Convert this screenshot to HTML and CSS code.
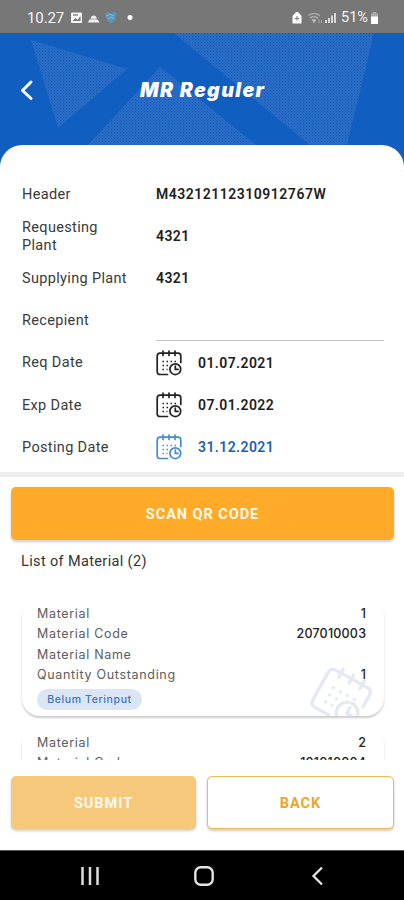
FILE: index.html
```html
<!DOCTYPE html>
<html lang="id">
<head>
<meta charset="utf-8">
<meta name="viewport" content="width=device-width, initial-scale=1">
<title>MR Reguler</title>
<link rel="stylesheet" href="styles.css">
</head>
<body>
<svg class="defs" aria-hidden="true">
  <symbol id="calendar" viewBox="0 0 26 26">
    <g fill="none" stroke="currentColor" stroke-width="1.700" stroke-linecap="round" stroke-linejoin="round">
      <path d="M11.500 24.500H4Q1.200 24.500 1.200 21.700V6Q1.200 3.200 4 3.200H22Q24.800 3.200 24.800 6V12.500"/>
      <path d="M7 1v4.500M13 1v4.500M19 1v4.500"/>
      <circle cx="19.300" cy="19.200" r="5.400"/>
      <path d="M19.300 16.200v3.200h2.700"/>
    </g>
    <path d="M6.500 11.500h14M6.500 15.500h8M6.500 19.500h5" fill="none" stroke="currentColor" stroke-width="1.500" stroke-dasharray="1.500 2.500"/>
  </symbol>
</svg>
<div class="screen">
  <div class="status">
    <span class="clock">10.27</span>
    <svg class="left-icons" viewBox="0 0 64 16">
      <rect x="1" y="2.500" width="11" height="10.500" rx="1" fill="#f4f4f4"/>
      <path d="M2.500 11l3-3 2 2 3-4v5z" fill="#777"/>
      <path d="M3 5h5" stroke="#777" stroke-width="1.300"/>
      <path d="M18 12.500q1-3.500 3-3.500-1-3 2.500-3.500 3.500 0 3 3.500 2 .5 3 3.500z" fill="#eee"/>
      <path d="M19 9h9" stroke="#999" stroke-width=".8"/>
      <path d="M35 3.500l3-1.500 3 1 4-1 1.500 2-1 3 .5 2-5 4.500-4-3z" fill="#5796b8"/>
      <path d="M36 6q4-3 8 0M38 9l3-2 3 2" fill="none" stroke="#8bb9ce"/>
      <circle cx="60" cy="7.500" r="2.500" fill="#fff"/>
    </svg>
    <svg class="right-icons" viewBox="0 0 46 16">
      <path d="M3.500 3.500h1V2h3v1.500h1L10.500 6v7.500h-9V6z" fill="#fff"/>
      <path d="M6 6v4.500M3.800 8.500h4.400" stroke="#777"/>
      <g fill="none" stroke="#aaa" stroke-width="1.500"><path d="M17 5.500q6-4 12 0M19 8q4-2.500 8 0"/></g>
      <path d="M21 9.500h4L23 13zM28 9v4M30.500 10v3" fill="#ccc" stroke="#aaa"/>
      <path d="M35 13v-3M38 13V8M41 13V5.500M44 13V3" stroke="#ddd" stroke-width="1.900"/>
    </svg>
    <span class="percent">51%</span>
    <svg class="battery" viewBox="0 0 9 14"><path d="M2.500 1h4v1.500H8V6H1V2.500h1.500z" fill="#aaa"/><path d="M1 5.500h7V13H1z" fill="#fff"/></svg>
  </div>
  <header class="hero">
    <svg class="pattern" viewBox="0 0 404 134" aria-hidden="true">
      <defs>
        <pattern id="dots" width="3" height="3" patternUnits="userSpaceOnUse">
          <rect width="3" height="3" fill="#2b6fc9"/>
          <rect width="1.200" height="1.200" fill="#105bba"/>
          <rect x="1.500" y="1.500" width="1.200" height="1.200" fill="#2061ba"/>
        </pattern>
      </defs>
      <g fill="url(#dots)">
        <path d="M31 7L127 36 58 95z"/>
        <path d="M174 0H374L347 112H310L204 25z"/>
        <path d="M88 112L160 34 256 112z"/>
      </g>
    </svg>
    <svg class="back-arrow" viewBox="0 0 14 22"><path d="M11 3L2.500 11.500 11 19.500" fill="none" stroke="#fff" stroke-width="3" stroke-linecap="round" stroke-linejoin="round"/></svg>
    <h1>MR Reguler</h1>
  </header>
  <main class="sheet">
    <section class="details">
      <div class="row"><span class="label">Header</span><b class="code">M43212112310912767W</b></div>
      <div class="row"><span class="label">Requesting<br>Plant</span><b>4321</b></div>
      <div class="row"><span class="label">Supplying Plant</span><b>4321</b></div>
      <div class="row"><span class="label">Recepient</span><span class="field"></span></div>
      <div class="row"><span class="label">Req Date</span><svg class="cal"><use href="#calendar"/></svg><b class="date">01.07.2021</b></div>
      <div class="row"><span class="label">Exp Date</span><svg class="cal"><use href="#calendar"/></svg><b class="date">07.01.2022</b></div>
      <div class="row active"><span class="label">Posting Date</span><svg class="cal"><use href="#calendar"/></svg><b class="date">31.12.2021</b></div>
    </section>
    <div class="divider"></div>
    <button class="btn scan">SCAN QR CODE</button>
    <h2>List of Material (2)</h2>
    <div class="list">
      <article class="card">
        <svg class="watermark"><use href="#calendar"/></svg>
        <div class="line"><span>Material</span><span>1</span></div>
        <div class="line"><span>Material Code</span><span>207010003</span></div>
        <div class="line"><span>Material Name</span></div>
        <div class="line"><span>Quantity Outstanding</span><span>1</span></div>
        <span class="tag">Belum Terinput</span>
      </article>
      <article class="card">
        <div class="line"><span>Material</span><span>2</span></div>
        <div class="line"><span>Material Code</span><span>101010004</span></div>
      </article>
    </div>
    <div class="actions">
      <button class="btn submit">SUBMIT</button>
      <button class="btn back">BACK</button>
    </div>
  </main>
  <nav class="navbar">
    <svg viewBox="0 0 22 22"><path d="M3.500 2v18M11 2v18M18.500 2v18" stroke="#ddd" stroke-width="2.500"/></svg>
    <svg viewBox="0 0 22 22"><rect x="2.300" y="2.300" width="17.400" height="17.400" rx="5.500" fill="none" stroke="#e4e4e4" stroke-width="2.400"/></svg>
    <svg viewBox="0 0 22 22"><path d="M15 2.500L6.500 11 15 19.500" fill="none" stroke="#e4e4e4" stroke-width="2.300"/></svg>
  </nav>
</div>
</body>
</html>
```
FILE: styles.css
```css
* { box-sizing: border-box; }
body { margin: 0; font-family: Roboto, sans-serif; color: #222; background: #fff; }
h1, h2 { margin: 0; }
.defs { position: absolute; width: 0; height: 0; }
.screen { width: 404px; height: 900px; display: flex; flex-direction: column; overflow: hidden; }

.status { flex: none; height: 33px; padding: 2px 25px 0 27px; display: flex; align-items: center; background: #777; color: #f4f4f4; }
.clock { width: 43px; font-size: 15px; letter-spacing: -.1px; }
.left-icons { width: 64px; height: 16px; }
.right-icons { width: 46px; height: 16px; margin-left: auto; }
.percent { width: 32px; padding-left: 4px; font-size: 14.500px; }
.battery { width: 9px; height: 14px; margin-left: 1px; }

.hero { flex: none; position: relative; height: 134px; background: #105ebf; display: flex; padding: 0 20px; align-items: flex-start; }
.pattern { position: absolute; inset: 0; width: 404px; height: 134px; }
.back-arrow { position: relative; width: 14px; height: 22px; margin-top: 46px; }
.hero h1 { position: relative; margin: 45px 0 0 106px; font: italic 900 19.500px/25px Inter, sans-serif; letter-spacing: 1.400px; color: #fff; white-space: nowrap; }

.sheet { flex: none; position: relative; height: 705px; margin-top: -22px; border-radius: 22px 22px 0 0; background: #fff; display: flex; flex-direction: column; }
.details { padding: 28px 20px 0 22px; height: 327px; }
.row { height: 42.200px; display: flex; align-items: center; font-size: 14.500px; line-height: 18px; }
.label { width: 134px; flex: none; padding-top: 1px; color: #3a3a3a; letter-spacing: .34px; }
.row b { font-weight: 600; font-size: 14px; letter-spacing: .42px; color: #1d1d1d; }
.row .code { letter-spacing: .51px; }
.field { flex: 1; height: 41px; border-bottom: 1px solid #c5c5c5; }
.cal { width: 26px; height: 26px; color: #222; margin-right: 16px; }
.active .cal { color: #438bd8; }
.row.active b { color: #1a5fae; }
.divider { flex: none; height: 5px; background: #eee; }

.btn { border: 0; border-radius: 5px; height: 53px; font: 700 14.500px Roboto, sans-serif; letter-spacing: .95px; color: #fff; padding: 1px 0 0; box-shadow: 0 2px 3px #0003; }
.scan { flex: none; margin: 10px 10px 0 11px; background: #ffab29; color: #fff9e9; }
h2 { margin: 13px 0 0 21px; font-size: 14.500px; line-height: 18px; font-weight: 400; letter-spacing: .36px; color: #333; }
.list { margin-top: 33px; height: 156px; flex: none; padding: 0 20px 0 22px; overflow: hidden; }
.card { position: relative; height: 118px; margin-top: -6px; padding: 6px 18px 0 15px; border-radius: 18px; box-shadow: 0 2px 2px #0003; overflow: hidden; background: #fff; }
.card + .card { margin-top: 11px; }
.line { position: relative; display: flex; justify-content: space-between; height: 20.300px; line-height: 20.500px; font-family: Inter, sans-serif; font-size: 12.500px; letter-spacing: .68px; color: #5c5c5c; }
.line span:nth-child(2) { color: #222; font-weight: 500; letter-spacing: .22px; margin-right: -.22px; }
.tag { display: block; width: 105px; height: 21px; margin-top: 4px; border-radius: 11px; background: #dae6f5; color: #3e75b5; font: 500 10.500px/22px Inter, sans-serif; letter-spacing: .62px; text-align: center; }
.watermark { position: absolute; right: 16px; bottom: -6px; width: 52px; height: 52px; color: #e4e9f3; transform: rotate(29deg); }
.actions { display: grid; grid-template-columns: 185px 187px; gap: 11px; padding: 16px 0 0 11px; }
.submit { background: #f6c87b; color: #fff8ed; }
.back { background: #fff; border: 1.500px solid #ecb95d; color: #eca629; }
.navbar { flex: 1; background: #000; border-top: 1px solid #555; display: flex; align-items: center; padding: 0 75px 0 79px; justify-content: space-between; }
.navbar svg { width: 22px; height: 22px; }
```
